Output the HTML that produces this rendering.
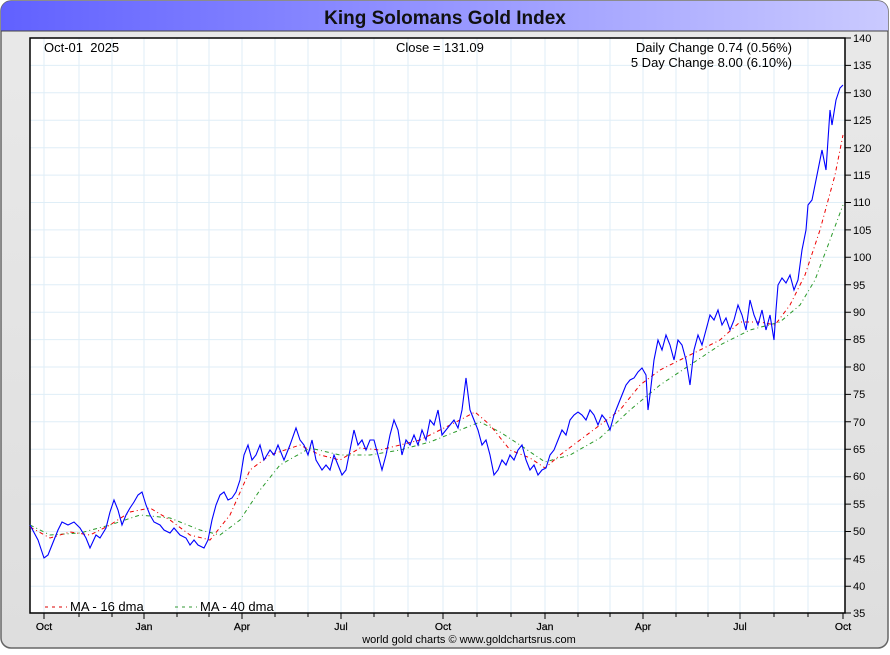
<!DOCTYPE html>
<html><head><style>
body{margin:0;width:890px;height:650px;overflow:hidden;background:#fff;font-family:"Liberation Sans",sans-serif}
</style></head><body>
<svg width="890" height="650" xmlns="http://www.w3.org/2000/svg" font-family="Liberation Sans, sans-serif">
<defs>
<linearGradient id="tb" x1="0" x2="1"><stop offset="0" stop-color="#6161ff"/><stop offset="1" stop-color="#cacaff"/></linearGradient>
<linearGradient id="bg" x1="0" x2="0" y1="0" y2="1"><stop offset="0" stop-color="#e9e9e9"/><stop offset="1" stop-color="#dedede"/></linearGradient>
</defs>
<rect x="1" y="1" width="887" height="647" rx="10" fill="url(#bg)" stroke="#666" stroke-width="1.5"/>
<path d="M1,31 V11 A10,10 0 0 1 11,1 H878 A10,10 0 0 1 888,11 V31 Z" fill="url(#tb)"/>
<line x1="1" y1="31" x2="888" y2="31" stroke="#444" stroke-width="1"/>
<text x="445" y="24" text-anchor="middle" font-size="19" font-weight="bold" fill="#111">King Solomans Gold Index</text>
<rect x="30" y="38" width="815" height="575" fill="#fff"/>
<g stroke="#dfeef7" stroke-width="1">
<path d="M44,38V613M79,38V613M112,38V613M144,38V613M177,38V613M209,38V613M242,38V613M275,38V613M308,38V613M341,38V613M374,38V613M408,38V613M443,38V613M477,38V613M511,38V613M545,38V613M578,38V613M610,38V613M643,38V613M676,38V613M708,38V613M740,38V613M774,38V613M808,38V613"/>
<path d="M30,65.4H845M30,92.8H845M30,120.3H845M30,147.7H845M30,175.1H845M30,202.5H845M30,229.9H845M30,257.3H845M30,284.8H845M30,312.2H845M30,339.6H845M30,367H845M30,394.4H845M30,421.8H845M30,449.3H845M30,476.7H845M30,504.1H845M30,531.5H845M30,558.9H845M30,586.3H845"/>
</g>
<path d="M30,38H845V613H30Z" fill="none" stroke="#000" stroke-width="1.5"/>
<g stroke="#000" stroke-width="1">
<path d="M845,38h6M845,65.4h6M845,92.8h6M845,120.3h6M845,147.7h6M845,175.1h6M845,202.5h6M845,229.9h6M845,257.3h6M845,284.8h6M845,312.2h6M845,339.6h6M845,367h6M845,394.4h6M845,421.8h6M845,449.3h6M845,476.7h6M845,504.1h6M845,531.5h6M845,558.9h6M845,586.3h6M845,613h6"/>
<path d="M44,613v6M79,613v4M112,613v4M144,613v6M177,613v4M209,613v4M242,613v6M275,613v4M308,613v4M341,613v6M374,613v4M408,613v4M443,613v6M477,613v4M511,613v4M545,613v6M578,613v4M610,613v4M643,613v6M676,613v4M708,613v4M740,613v6M774,613v4M808,613v4M843,613v6"/>
</g>
<g font-size="11" fill="#000">
<text x="853" y="42">140</text><text x="853" y="69">135</text><text x="853" y="97">130</text><text x="853" y="124">125</text><text x="853" y="152">120</text><text x="853" y="179">115</text><text x="853" y="206">110</text><text x="853" y="234">105</text><text x="853" y="261">100</text><text x="853" y="289">95</text><text x="853" y="316">90</text><text x="853" y="343">85</text><text x="853" y="371">80</text><text x="853" y="398">75</text><text x="853" y="426">70</text><text x="853" y="453">65</text><text x="853" y="480">60</text><text x="853" y="508">55</text><text x="853" y="535">50</text><text x="853" y="563">45</text><text x="853" y="590">40</text><text x="853" y="617">35</text>
</g>
<g font-size="10.5" fill="#000" text-anchor="middle" stroke="#000" stroke-width="0.2">
<text x="44" y="630">Oct</text><text x="144" y="630">Jan</text><text x="242" y="630">Apr</text><text x="341" y="630">Jul</text><text x="443" y="630">Oct</text><text x="545" y="630">Jan</text><text x="643" y="630">Apr</text><text x="740" y="630">Jul</text><text x="843" y="630">Oct</text>
</g>
<text x="469" y="643" font-size="11" text-anchor="middle" fill="#000">world gold charts © www.goldchartsrus.com</text>
<g font-size="13" fill="#000">
<text x="44" y="52" xml:space="preserve">Oct-01  2025</text>
<text x="396" y="52">Close = 131.09</text>
<text x="792" y="52" text-anchor="end">Daily Change 0.74 (0.56%)</text>
<text x="792" y="67" text-anchor="end">5 Day Change 8.00 (6.10%)</text>
<text x="70" y="611">MA - 16 dma</text>
<text x="200" y="611">MA - 40 dma</text>
</g>
<line x1="45" y1="607" x2="67" y2="607" stroke="#d00" stroke-dasharray="3,4"/>
<line x1="175" y1="607" x2="197" y2="607" stroke="#393" stroke-dasharray="3,4"/>
<polyline fill="none" stroke="#2a9a2a" stroke-width="1" stroke-dasharray="4,3,1,3" points="30,525 50,535 80,533 110,525 140,515 170,518 200,530 220,535 240,520 260,490 280,465 310,448 340,455 370,455 400,450 430,442 460,430 480,422 500,432 520,445 545,462 570,455 600,438 630,410 660,385 690,365 720,345 750,330 780,322 800,305 815,280 830,240 843,205"/>
<polyline fill="none" stroke="#e00" stroke-width="1" stroke-dasharray="4,3,1,3" points="30,527 50,538 70,532 90,535 110,525 130,512 150,508 170,520 190,535 210,540 230,515 250,470 270,455 300,445 320,455 340,460 360,448 380,450 400,445 420,440 440,430 460,420 475,412 490,425 510,450 530,458 545,468 560,455 580,440 600,425 620,410 640,385 660,370 680,360 700,350 720,340 740,322 760,322 775,325 790,305 805,275 820,230 835,175 843,135"/>
<polyline fill="none" stroke="#00f" stroke-width="1.1" points="30,525 38,540 44,558 48,555 52,545 58,530 62,522 68,525 74,522 80,528 86,538 90,548 96,535 100,538 106,528 110,512 114,500 118,510 122,525 126,515 130,508 134,502 138,495 142,492 146,505 150,515 154,522 160,525 164,530 170,533 174,528 180,535 186,538 190,545 194,540 198,545 204,548 208,540 212,520 216,505 220,495 224,492 228,500 232,498 236,492 240,480 244,455 248,445 252,460 256,455 260,445 264,460 270,450 274,455 278,445 284,460 290,445 296,428 300,440 304,445 308,455 312,440 316,460 322,470 326,465 330,470 334,455 338,465 342,475 346,470 350,450 354,430 358,445 362,440 366,450 370,440 374,440 378,455 382,470 386,455 390,435 394,420 398,430 402,455 406,440 410,445 414,435 418,445 422,430 426,440 430,420 434,425 438,410 442,435 446,430 450,425 454,420 458,428 462,410 466,378 470,410 474,420 478,430 482,445 486,440 490,455 494,475 498,470 502,460 506,465 510,455 514,460 518,450 522,445 526,460 530,470 534,465 538,475 542,470 546,468 550,455 554,450 558,440 562,430 566,435 570,420 574,415 578,412 582,415 586,420 590,410 594,415 598,425 602,415 606,420 610,430 614,415 618,405 622,395 626,385 630,380 634,378 638,372 642,368 646,375 648,410 650,395 654,360 658,340 662,350 666,335 670,345 674,360 678,340 682,345 686,360 690,385 694,350 698,335 702,345 706,330 710,315 714,320 718,310 722,325 726,318 730,330 734,320 738,305 742,315 746,330 750,300 754,315 758,325 762,310 766,330 770,315 774,340 776,310 778,285 782,278 786,283 790,275 794,290 798,280 802,250 806,230 808,205 812,200 816,180 818,170 822,150 826,170 830,110 832,125 836,100 840,88 843,85"/>
</svg>
</body></html>
